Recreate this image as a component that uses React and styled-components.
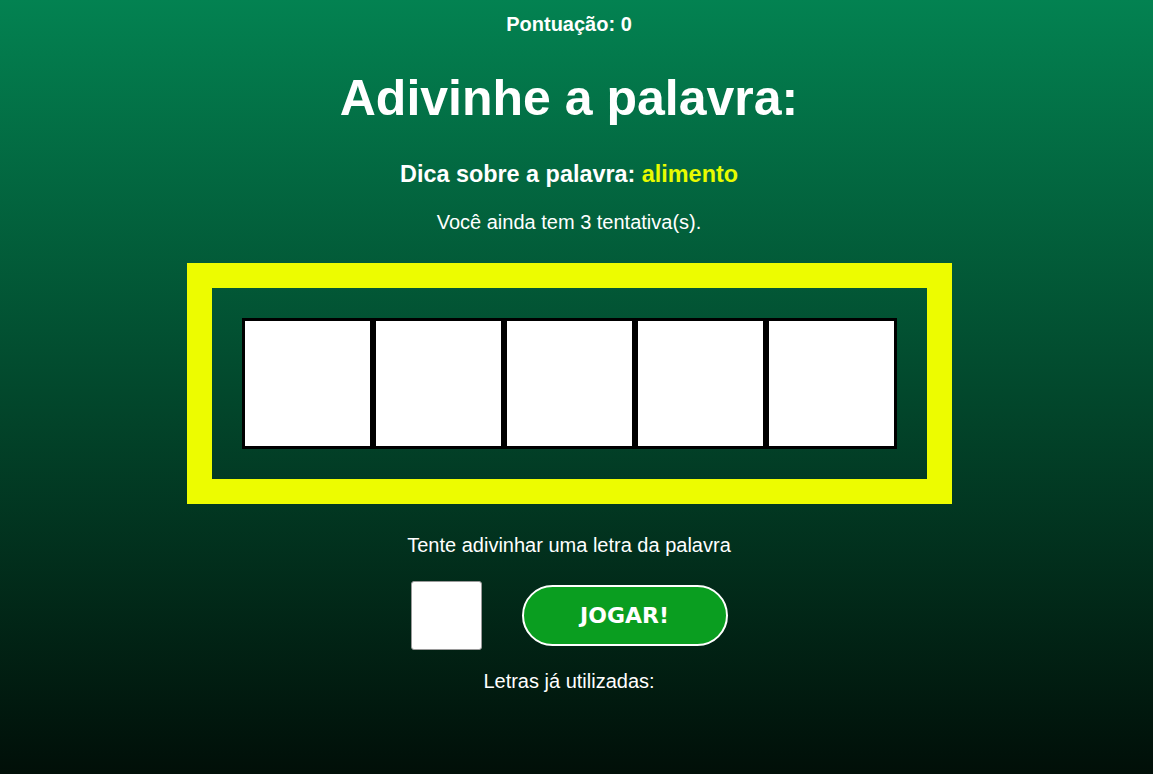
import React from "react";
import styled, { createGlobalStyle } from "styled-components";

const GlobalStyle = createGlobalStyle`
  html, body {
    margin: 0;
    padding: 0;
    height: 100%;
  }
  body {
    font-family: "Liberation Sans", Arial, sans-serif;
    color: #ffffff;
    background: #010f08;
  }
  #root {
    min-height: 100%;
  }
`;

const Page = styled.main`
  min-height: 774px;
  box-sizing: border-box;
  padding: 13px 15px 40px 0;
  background: linear-gradient(180deg, #038251 0%, #010f08 100%);
  display: flex;
  flex-direction: column;
  align-items: center;
  text-align: center;
`;

const Score = styled.div`
  font-size: 20px;
  line-height: 22px;
  font-weight: 700;
`;

const Title = styled.h1`
  margin: 35px 0 0;
  font-size: 50px;
  line-height: 56px;
  font-weight: 700;
`;

const Hint = styled.h3`
  margin: 35px 0 0;
  font-size: 23.4px;
  line-height: 26px;
  font-weight: 700;
`;

const HintWord = styled.span`
  color: #e8fb00;
`;

const Text = styled.p`
  margin: ${(p) => p.$mt}px 0 0;
  font-size: 20px;
  line-height: 22px;
`;

const Frame = styled.section`
  margin-top: 30px;
  border: 25px solid #edfc00;
  padding: 30px;
  display: flex;
`;

const LetterBox = styled.div`
  width: 125px;
  height: 125px;
  border: 3px solid #000;
  background: #ffffff;
  color: #000;
  font-size: 60px;
  font-weight: 700;
  display: flex;
  align-items: center;
  justify-content: center;
`;

const Controls = styled.div`
  margin-top: 25px;
  display: flex;
  align-items: center;
  gap: 40px;
`;

const LetterInput = styled.input`
  box-sizing: border-box;
  width: 71px;
  height: 69px;
  border: 1px solid #9a9a9a;
  border-radius: 3px;
  background: #fff;
  font-size: 36px;
  text-align: center;
  outline: none;
`;

const PlayButton = styled.button`
  box-sizing: border-box;
  width: 206px;
  height: 61px;
  border: 2px solid #ffffff;
  border-radius: 31px;
  background: #0a9e20;
  color: #ffffff;
  font-family: "DejaVu Sans", Verdana, sans-serif;
  font-size: 22px;
  font-weight: 700;
  cursor: pointer;
`;

export default function App() {
  const letters = ["", "", "", "", ""];
  return (
    <>
      <GlobalStyle />
      <Page>
        <Score>Pontuação: 0</Score>
        <Title>Adivinhe a palavra:</Title>
        <Hint>
          Dica sobre a palavra: <HintWord>alimento</HintWord>
        </Hint>
        <Text $mt={24}>Você ainda tem 3 tentativa(s).</Text>
        <Frame>
          {letters.map((l, i) => (
            <LetterBox key={i}>{l}</LetterBox>
          ))}
        </Frame>
        <Text $mt={30}>Tente adivinhar uma letra da palavra</Text>
        <Controls>
          <LetterInput maxLength={1} />
          <PlayButton>JOGAR!</PlayButton>
        </Controls>
        <Text $mt={20}>Letras já utilizadas:</Text>
      </Page>
    </>
  );
}
